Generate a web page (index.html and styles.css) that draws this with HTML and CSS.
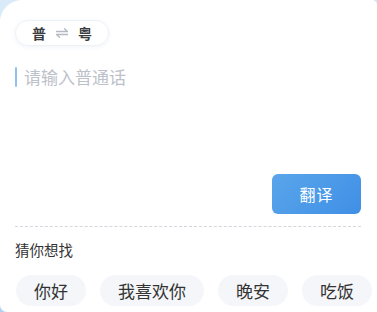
FILE: index.html
```
<!DOCTYPE html>
<html lang="zh">
<head>
<meta charset="utf-8">
<link rel="stylesheet" href="styles.css">
</head>
<body>
<div class="card">
  <div class="lang">
    <span class="lang-name">普</span>
    <svg class="swap" width="12" height="10" viewBox="0 0 12 10"><path d="M0.5 3.5H11.5L8.5 0.8M11.5 6.5H0.5L3.5 9.2" fill="none" stroke="#b4b9c2" stroke-width="1.3" stroke-linecap="round" stroke-linejoin="round"/></svg>
    <span class="lang-name">粤</span>
  </div>
  <div class="input">
    <span class="caret"></span>
    <span class="placeholder">请输入普通话</span>
  </div>
  <div class="actions">
    <button class="translate">翻译</button>
  </div>
  <div class="divider"></div>
  <div class="suggest-title">猜你想找</div>
  <div class="chips">
    <span class="chip">你好</span>
    <span class="chip">我喜欢你</span>
    <span class="chip">晚安</span>
    <span class="chip">吃饭</span>
  </div>
</div>
</body>
</html>
```
FILE: styles.css
```
html {
  margin: 0;
  padding: 0;
  background: linear-gradient(160deg, #d9ebf9 0%, #cfe6f7 40%, #8db9ee 100%);
}
body {
  margin: 0;
  padding: 0;
  width: 377px;
  height: 312px;
  font-family: "Noto Sans CJK SC", "Noto Sans", sans-serif;
  color: #333;
}
.card {
  box-sizing: border-box;
  width: 377px;
  height: 312px;
  background: #fff;
  border-radius: 22px 5px 0 7px;
  padding: 20px 0 0 15px;
  display: flex;
  flex-direction: column;
  align-items: flex-start;
}
.lang {
  box-sizing: border-box;
  display: flex;
  align-items: center;
  gap: 10px;
  height: 26px;
  padding: 0 16px;
  border: 1px solid #edf1f8;
  border-radius: 13px;
  box-shadow: 0 1px 4px rgba(120, 150, 200, 0.12);
}
.lang-name {
  font-size: 14px;
  font-weight: 600;
  line-height: 1;
  color: #3a3b3e;
}
.swap {
  display: block;
}
.input {
  display: flex;
  align-items: center;
  gap: 7px;
  margin-top: 21px;
  height: 20px;
}
.caret {
  width: 2px;
  height: 20px;
  background: #8fc2f2;
  border-radius: 1px;
}
.placeholder {
  font-size: 17px;
  line-height: 20px;
  color: #bdc1c9;
}
.actions {
  align-self: stretch;
  display: flex;
  justify-content: flex-end;
  padding-right: 16px;
  margin-top: 87px;
}
.translate {
  width: 89px;
  height: 40px;
  border: none;
  border-radius: 6px;
  background: linear-gradient(135deg, #5aa5ea, #3f8fe6);
  color: #fff;
  font-family: inherit;
  font-size: 16px;
  letter-spacing: 1px;
  padding: 0;
}
.divider {
  width: 346px;
  height: 0;
  margin-top: 12px;
  border-top: 1px dashed #d3d7dd;
}
.suggest-title {
  margin-top: 13px;
  font-size: 14.5px;
  line-height: 20px;
  color: #333;
}
.chips {
  display: flex;
  gap: 14px;
  margin-top: 15px;
  margin-left: 1px;
}
.chip {
  height: 31px;
  line-height: 31px;
  padding: 0 18px;
  border-radius: 16px;
  background: #f4f6f9;
  font-size: 17px;
  color: #333;
  white-space: nowrap;
}
```
